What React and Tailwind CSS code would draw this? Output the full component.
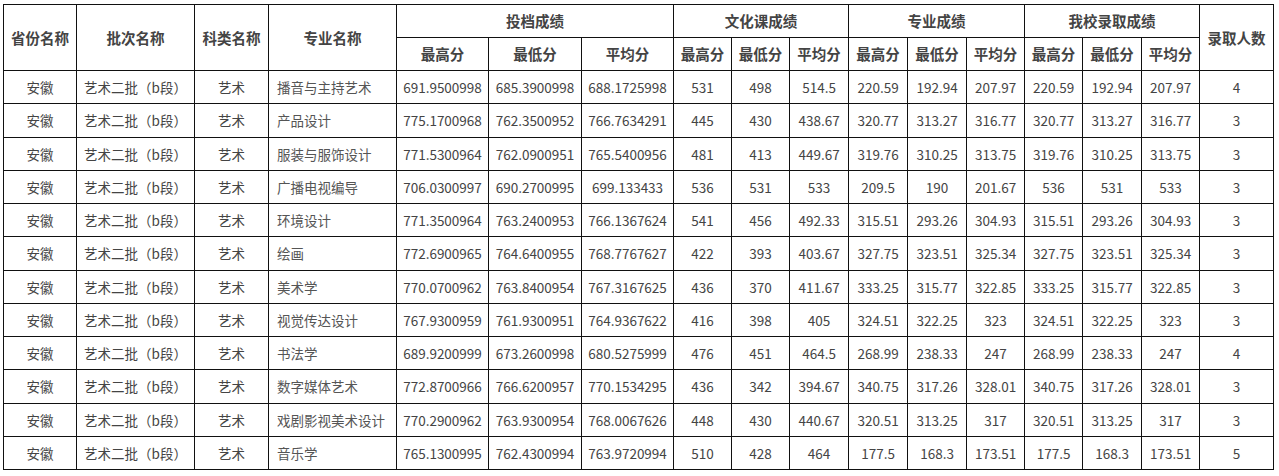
const rows = [
  ["播音与主持艺术", "691.9500998", "685.3900998", "688.1725998", "531", "498", "514.5", "220.59", "192.94", "207.97", "220.59", "192.94", "207.97", "4"],
  ["产品设计", "775.1700968", "762.3500952", "766.7634291", "445", "430", "438.67", "320.77", "313.27", "316.77", "320.77", "313.27", "316.77", "3"],
  ["服装与服饰设计", "771.5300964", "762.0900951", "765.5400956", "481", "413", "449.67", "319.76", "310.25", "313.75", "319.76", "310.25", "313.75", "3"],
  ["广播电视编导", "706.0300997", "690.2700995", "699.133433", "536", "531", "533", "209.5", "190", "201.67", "536", "531", "533", "3"],
  ["环境设计", "771.3500964", "763.2400953", "766.1367624", "541", "456", "492.33", "315.51", "293.26", "304.93", "315.51", "293.26", "304.93", "3"],
  ["绘画", "772.6900965", "764.6400955", "768.7767627", "422", "393", "403.67", "327.75", "323.51", "325.34", "327.75", "323.51", "325.34", "3"],
  ["美术学", "770.0700962", "763.8400954", "767.3167625", "436", "370", "411.67", "333.25", "315.77", "322.85", "333.25", "315.77", "322.85", "3"],
  ["视觉传达设计", "767.9300959", "761.9300951", "764.9367622", "416", "398", "405", "324.51", "322.25", "323", "324.51", "322.25", "323", "3"],
  ["书法学", "689.9200999", "673.2600998", "680.5275999", "476", "451", "464.5", "268.99", "238.33", "247", "268.99", "238.33", "247", "4"],
  ["数字媒体艺术", "772.8700966", "766.6200957", "770.1534295", "436", "342", "394.67", "340.75", "317.26", "328.01", "340.75", "317.26", "328.01", "3"],
  ["戏剧影视美术设计", "770.2900962", "763.9300954", "768.0067626", "448", "430", "440.67", "320.51", "313.25", "317", "320.51", "313.25", "317", "3"],
  ["音乐学", "765.1300995", "762.4300994", "763.9720994", "510", "428", "464", "177.5", "168.3", "173.51", "177.5", "168.3", "173.51", "5"],
];

const widths = [73, 118, 74, 128, 92, 93, 92, 58, 58, 59, 59, 59, 58, 58, 59, 58, 74];
const groups = ["投档成绩", "文化课成绩", "专业成绩", "我校录取成绩"];

const th = "border border-[#111] font-bold text-[#444] text-[14.5px] text-center p-0";
const td = "border border-[#111] text-[#444] text-[13.5px] text-center p-0 whitespace-nowrap";

export default function App() {
  return (
    <div className="bg-white w-[1279px] h-[476px] pt-[4px] pl-[3px]">
      <table
        className="table-fixed border-collapse w-[1270px]"
        style={{ fontFamily: '"Microsoft YaHei", "Noto Sans CJK SC", "Noto Sans", sans-serif' }}
      >
        <colgroup>
          {widths.map((w, i) => (
            <col key={i} style={{ width: w }} />
          ))}
        </colgroup>
        <thead>
          <tr className="h-[33px]">
            <th rowSpan={2} className={th}>省份名称</th>
            <th rowSpan={2} className={th}>批次名称</th>
            <th rowSpan={2} className={th}>科类名称</th>
            <th rowSpan={2} className={th}>专业名称</th>
            {groups.map((g, i) => (
              <th key={g} colSpan={3} className={th}>{g}</th>
            ))}
            <th rowSpan={2} className={th}>录取人数</th>
          </tr>
          <tr className="h-[33px]">
            {groups.map((g) => (
              <>
                <th key={g + "1"} className={th}>最高分</th>
                <th key={g + "2"} className={th}>最低分</th>
                <th key={g + "3"} className={th}>平均分</th>
              </>
            ))}
          </tr>
        </thead>
        <tbody>
          {rows.map((r) => (
            <tr key={r[0]} className="h-[33.25px]">
              <td className={td}>安徽</td>
              <td className={td}>艺术二批（b段）</td>
              <td className={td}>艺术</td>
              <td className={td + " !text-left pl-[8px] text-[#555]"}>{r[0]}</td>
              {r.slice(1).map((v, i) => (
                <td key={i} className={td}>{v}</td>
              ))}
            </tr>
          ))}
        </tbody>
      </table>
    </div>
  );
}
